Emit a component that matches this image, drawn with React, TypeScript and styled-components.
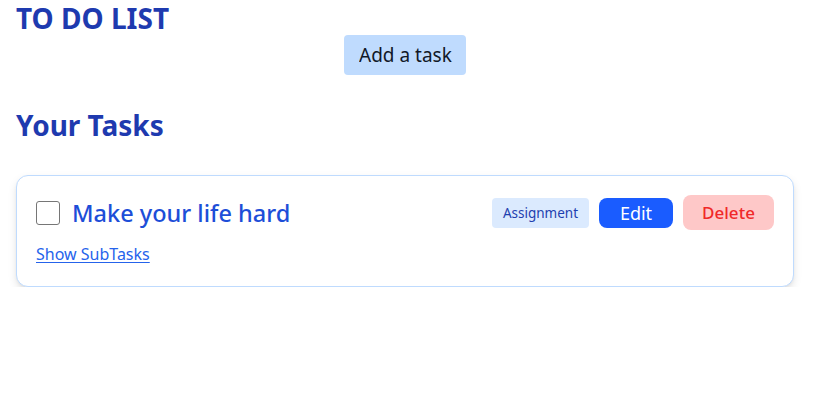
import React from "react";
import styled, { createGlobalStyle } from "styled-components";

const Global = createGlobalStyle`
  html, body { margin: 0; padding: 0; background: #ffffff; }
  body { font-family: "Noto Sans", "Open Sans", sans-serif; color: #111827; }
  * { box-sizing: border-box; }
`;

const Page = styled.div`
  width: 778px;
  margin-left: 16px;
  display: flex;
  flex-direction: column;
`;

const Title = styled.h1`
  margin: 0;
  font-size: 28px;
  line-height: 36px;
  font-weight: 700;
  color: #1e3aaf;
`;

const InputRow = styled.div`
  display: flex;
  justify-content: center;
  margin-top: -1px;
`;

const TaskInput = styled.input`
  width: 122px;
  height: 40px;
  border: none;
  outline: none;
  border-radius: 4px;
  background: #bfdbfe;
  padding: 0 0 0 15px;
  font-family: inherit;
  font-size: 19px;
  color: #111827;
  caret-color: #111827;
  &::placeholder { color: #111827; opacity: 1; }
`;

const SectionTitle = styled.h2`
  margin: 32px 0 0;
  font-size: 28px;
  line-height: 36px;
  font-weight: 700;
  color: #1e3aaf;
`;

const Card = styled.div`
  margin-top: 32px;
  border: 1px solid #bfdbfe;
  border-radius: 12px;
  background: #ffffff;
  box-shadow: 0 4px 10px -1px rgba(0, 0, 0, 0.13), 0 2px 4px -2px rgba(0, 0, 0, 0.1);
  padding: 19px 19px 20px;
  display: flex;
  flex-direction: column;
  gap: 12px;
`;

const Row = styled.div`
  display: flex;
  align-items: center;
  justify-content: space-between;
  height: 35px;
`;

const Left = styled.div`
  display: flex;
  align-items: center;
  gap: 12px;
`;

const Check = styled.input.attrs({ type: "checkbox" })`
  appearance: none;
  margin: 0;
  width: 24px;
  height: 24px;
  border: 1.5px solid #767676;
  border-radius: 3px;
  background: #fff;
`;

const TaskName = styled.span`
  font-size: 23.5px;
  font-weight: 500;
  color: #1d4ed8;
  line-height: 32px;
`;

const Actions = styled.div`
  display: flex;
  align-items: center;
  gap: 10px;
`;

const Badge = styled.span`
  display: inline-flex;
  align-items: center;
  justify-content: center;
  width: 97px;
  height: 30px;
  background: #dbeafe;
  color: #1e40af;
  font-size: 13.5px;
  border-radius: 4px;
`;

const Button = styled.button<{ $variant: "edit" | "delete" }>`
  border: none;
  font-family: inherit;
  font-size: ${(p) => (p.$variant === "edit" ? "18px" : "17px")};
  font-weight: ${(p) => (p.$variant === "edit" ? 400 : 500)};
  border-radius: 8px;
  display: inline-flex;
  align-items: center;
  justify-content: center;
  padding: 0;
  width: ${(p) => (p.$variant === "edit" ? "74px" : "91px")};
  height: ${(p) => (p.$variant === "edit" ? "30px" : "35px")};
  background: ${(p) => (p.$variant === "edit" ? "#1a5cff" : "#fec8c8")};
  color: ${(p) => (p.$variant === "edit" ? "#ffffff" : "#f02828")};
`;

const SubLink = styled.a`
  align-self: flex-start;
  font-size: 16px;
  line-height: 24px;
  color: #2563eb;
  text-decoration: underline;
  text-underline-offset: 2px;
  cursor: pointer;
`;

export default function App() {
  return (
    <>
      <Global />
      <Page>
        <Title>TO DO LIST</Title>
        <InputRow>
          <TaskInput placeholder="Add a task" autoFocus />
        </InputRow>
        <SectionTitle>Your Tasks</SectionTitle>
        <Card>
          <Row>
            <Left>
              <Check />
              <TaskName>Make your life hard</TaskName>
            </Left>
            <Actions>
              <Badge>Assignment</Badge>
              <Button $variant="edit">Edit</Button>
              <Button $variant="delete">Delete</Button>
            </Actions>
          </Row>
          <SubLink>Show SubTasks</SubLink>
        </Card>
      </Page>
    </>
  );
}
